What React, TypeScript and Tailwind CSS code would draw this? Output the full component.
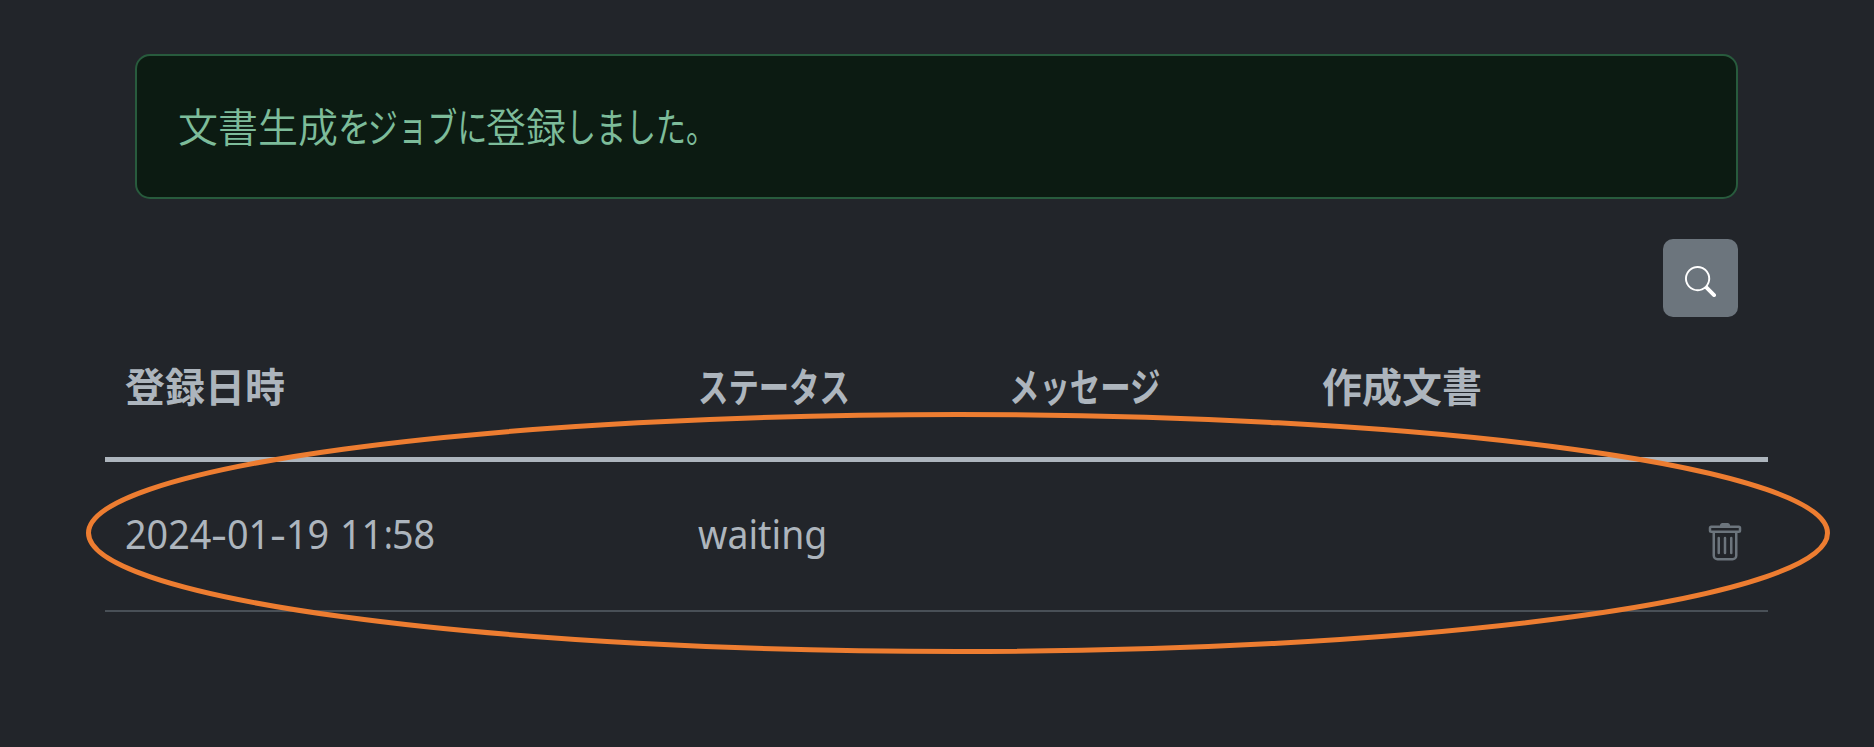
import { ReactNode } from "react";

function Run({ w, s, children }: { w: number; s: number; children: ReactNode }) {
  return (
    <span className="inline-block whitespace-pre" style={{ width: w }}>
      <span className="inline-block origin-left" style={{ transform: `scaleX(${s})` }}>
        {children}
      </span>
    </span>
  );
}

function SearchIcon() {
  return (
    <svg className="h-[31px] w-[31px]" viewBox="0 0 16 16" fill="currentColor">
      <path d="M11.742 10.344a6.5 6.5 0 1 0-1.397 1.398h-.001q.044.06.098.115l3.85 3.85a1 1 0 0 0 1.415-1.414l-3.85-3.85a1 1 0 0 0-.115-.1zM12 6.5a5.5 5.5 0 1 1-11 0 5.5 5.5 0 0 1 11 0" />
    </svg>
  );
}

function TrashIcon() {
  return (
    <svg className="h-10 w-10" viewBox="0 0 16 16" fill="currentColor">
      <path d="M5.5 5.5A.5.5 0 0 1 6 6v6a.5.5 0 0 1-1 0V6a.5.5 0 0 1 .5-.5m2.5 0a.5.5 0 0 1 .5.5v6a.5.5 0 0 1-1 0V6a.5.5 0 0 1 .5-.5m3 .5a.5.5 0 0 0-1 0v6a.5.5 0 0 0 1 0z" />
      <path d="M14.5 3a1 1 0 0 1-1 1H13v9a2 2 0 0 1-2 2H5a2 2 0 0 1-2-2V4h-.5a1 1 0 0 1-1-1V2a1 1 0 0 1 1-1H6a1 1 0 0 1 1-1h2a1 1 0 0 1 1 1h3.5a1 1 0 0 1 1 1zM4.118 4 4 4.059V13a1 1 0 0 0 1 1h6a1 1 0 0 0 1-1V4.059L11.882 4zM2.5 3h11V2h-11z" />
    </svg>
  );
}

const columns = "grid grid-cols-[573px_312px_312px_312px_1fr] pl-[20px]";

export default function App() {
  return (
    <div className="relative h-[747px] w-[1874px] overflow-hidden bg-[#22252a] pt-[54px] pr-[106px] pl-[105px] font-['Noto_Sans','Noto_Sans_CJK_JP',sans-serif] text-[40px] leading-[60px] text-[#adb5bd]">
      <div className="mx-[30px] flex h-[145px] items-center rounded-[15px] border-2 border-[#285b3d] bg-[#0c1b12] pb-[4px] pl-[41px] font-['Noto_Sans_CJK_JP',sans-serif] font-[350] whitespace-nowrap text-[#7dbc9a]">
        <Run w={160} s={1}>文書生成</Run>
        <span className="font-normal"><Run w={30} s={0.82}>を</Run></span>
        <span className="font-normal"><Run w={118} s={0.745}>ジョブに</Run></span>
        <Run w={80} s={1}>登録</Run>
        <span className="font-normal"><Run w={145} s={0.75}>しました。</Run></span>
      </div>

      <div className="mt-[40px] mr-[30px] flex justify-end">
        <button className="flex h-[78px] w-[75px] items-center justify-center rounded-[10px] bg-[#6c757d] pt-[7px] text-white">
          <SearchIcon />
        </button>
      </div>

      <div className="mt-[35px]">
        <div className={`${columns} h-[110px] items-start border-b-[5px] border-[#adb5bd] pt-[3px] font-['Noto_Sans_CJK_JP',sans-serif] font-bold whitespace-nowrap`}>
          <span>登録日時</span>
          <Run w={150} s={0.76}>ステータス</Run>
          <span className="-ml-px"><Run w={150} s={0.76}>メッセージ</Run></span>
          <span>作成文書</span>
        </div>
        <div className={`${columns} h-[150px] items-center border-b-2 border-[#495057]`}>
          <span className="pb-[5px] whitespace-nowrap">
            <Run w={86.3} s={0.943}>2024</Run>
            <Run w={16} s={1.24}>-</Run>
            <Run w={43.1} s={0.943}>01</Run>
            <Run w={16} s={1.24}>-</Run>
            <Run w={43.1} s={0.943}>19</Run>
            <Run w={11} s={1}> </Run>
            <Run w={43.1} s={0.943}>11</Run>
            <Run w={8.7} s={0.81}>:</Run>
            <Run w={43.1} s={0.943}>58</Run>
          </span>
          <span className="pb-[5px]"><Run w={130} s={0.935}>waiting</Run></span>
          <span />
          <span />
          <button className="flex justify-end pt-[13px] pr-[23px] text-[#6c757d]">
            <TrashIcon />
          </button>
        </div>
      </div>

      <svg className="pointer-events-none absolute top-[410px] left-[84px]" width="1748" height="246" fill="none">
        <ellipse cx="874" cy="123" rx="869.5" ry="118.5" stroke="#ed7d31" strokeWidth="5" />
      </svg>
    </div>
  );
}
